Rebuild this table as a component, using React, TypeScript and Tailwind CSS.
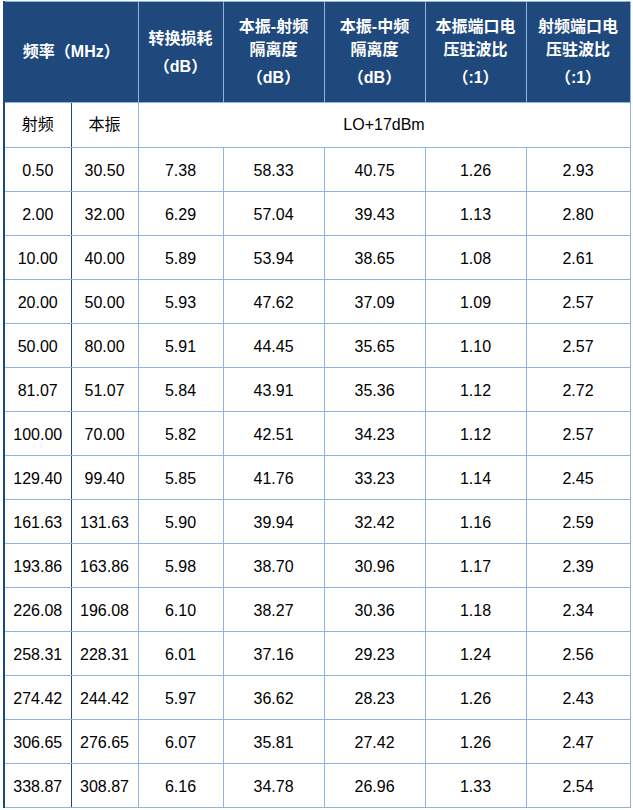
const rows: string[][] = [
  ['0.50', '30.50', '7.38', '58.33', '40.75', '1.26', '2.93'],
  ['2.00', '32.00', '6.29', '57.04', '39.43', '1.13', '2.80'],
  ['10.00', '40.00', '5.89', '53.94', '38.65', '1.08', '2.61'],
  ['20.00', '50.00', '5.93', '47.62', '37.09', '1.09', '2.57'],
  ['50.00', '80.00', '5.91', '44.45', '35.65', '1.10', '2.57'],
  ['81.07', '51.07', '5.84', '43.91', '35.36', '1.12', '2.72'],
  ['100.00', '70.00', '5.82', '42.51', '34.23', '1.12', '2.57'],
  ['129.40', '99.40', '5.85', '41.76', '33.23', '1.14', '2.45'],
  ['161.63', '131.63', '5.90', '39.94', '32.42', '1.16', '2.59'],
  ['193.86', '163.86', '5.98', '38.70', '30.96', '1.17', '2.39'],
  ['226.08', '196.08', '6.10', '38.27', '30.36', '1.18', '2.34'],
  ['258.31', '228.31', '6.01', '37.16', '29.23', '1.24', '2.56'],
  ['274.42', '244.42', '5.97', '36.62', '28.23', '1.26', '2.43'],
  ['306.65', '276.65', '6.07', '35.81', '27.42', '1.26', '2.47'],
  ['338.87', '308.87', '6.16', '34.78', '26.96', '1.33', '2.54'],
]

const Head = ({ lines, unit }: { lines: string[]; unit: string }) => (
  <th className="border border-[#8db3e2] bg-[#1f497d] p-0 align-middle font-bold text-white">
    <div className="leading-[23px]">
      {lines.map(l => (
        <div key={l}>{l}</div>
      ))}
    </div>
    <div className="mt-[5px] leading-[23px]">{unit}</div>
  </th>
)

export default function App() {
  return (
    <div className="bg-white pl-[3px] pt-px" style={{ fontFamily: '"Liberation Sans", "Noto Sans CJK SC", sans-serif' }}>
      <table className="w-[626px] table-fixed border-collapse text-center text-[16px] text-black">
        <colgroup>
          <col className="w-[67px]" />
          <col className="w-[67px]" />
          <col className="w-[85px]" />
          <col className="w-[101px]" />
          <col className="w-[101px]" />
          <col className="w-[101px]" />
          <col className="w-[104px]" />
        </colgroup>
        <thead>
          <tr className="h-[101px]">
            <th colSpan={2} className="border border-l-2 border-[#8db3e2] border-l-[#1f497d] bg-[#1f497d] p-0 align-middle font-bold text-white">
              频率（MHz）
            </th>
            <Head lines={['转换损耗']} unit="（dB）" />
            <Head lines={['本振-射频', '隔离度']} unit="（dB）" />
            <Head lines={['本振-中频', '隔离度']} unit="（dB）" />
            <Head lines={['本振端口电', '压驻波比']} unit="（:1）" />
            <Head lines={['射频端口电', '压驻波比']} unit="（:1）" />
          </tr>
        </thead>
        <tbody>
          <tr className="h-[45px]">
            <td className="border border-l-2 border-[#8db3e2] border-x-[#1f497d] p-0">射频</td>
            <td className="border border-[#8db3e2] p-0">本振</td>
            <td colSpan={5} className="border border-[#8db3e2] p-0">LO+17dBm</td>
          </tr>
          {rows.map(r => (
            <tr key={r[0]} className="h-[44px]">
              {r.map((v, i) => (
                <td
                  key={i}
                  className={
                    i === 0
                      ? 'border border-l-2 border-[#8db3e2] border-x-[#1f497d] p-0 pt-[3px]'
                      : 'border border-[#8db3e2] p-0 pt-[3px]'
                  }
                >
                  {v}
                </td>
              ))}
            </tr>
          ))}
        </tbody>
      </table>
    </div>
  )
}
